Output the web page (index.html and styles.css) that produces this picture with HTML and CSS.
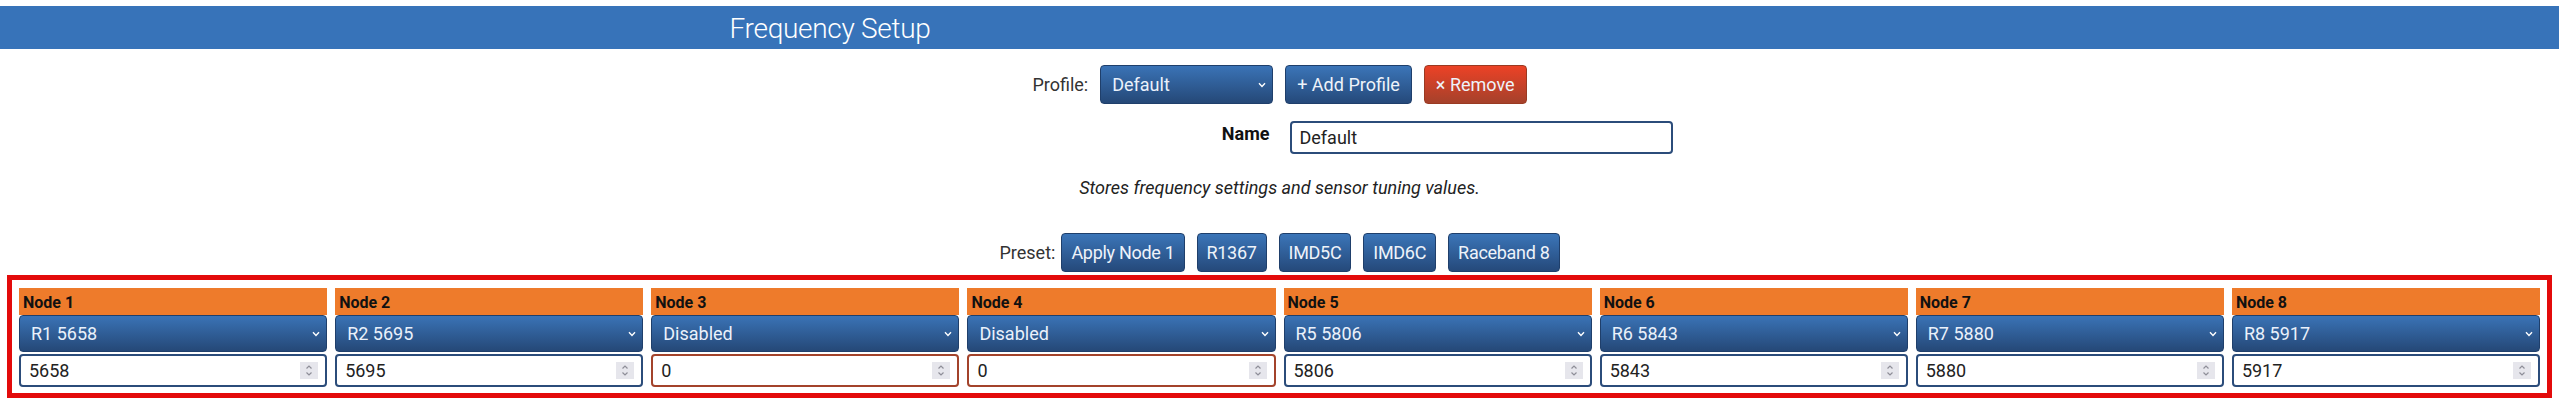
FILE: index.html
```html
<!DOCTYPE html>
<html lang="en">
<head>
<meta charset="utf-8">
<title>Frequency Setup</title>
<link rel="stylesheet" href="styles.css">
</head>
<body>
<header class="topbar">
  <div class="topbar-inner"><h1 class="title">Frequency Setup</h1></div>
</header>
<main class="page">
  <div class="profile-row">
    <label class="row-label" for="profile">Profile:</label>
    <div class="select-wrap profile-select">
      <select id="profile" class="sel"><option>Default</option></select>
      <svg class="chev" width="8" height="6" viewBox="0 0 8 6"><path d="M1 1.2 L4 4.4 L7 1.2" fill="none" stroke="#fff" stroke-width="1.4"/></svg>
    </div>
    <button class="btn btn-blue">+ Add Profile</button>
    <button class="btn btn-red">× Remove</button>
  </div>

  <div class="name-row">
    <div class="name-label">Name</div>
    <div class="name-field"><input class="text-input" type="text" value="Default"></div>
  </div>

  <p class="desc">Stores frequency settings and sensor tuning values.</p>

  <div class="preset-row">
    <span class="row-label">Preset:</span>
    <div class="preset-btns">
      <button class="btn btn-blue btn-preset">Apply Node 1</button>
      <button class="btn btn-blue btn-preset">R1367</button>
      <button class="btn btn-blue btn-preset">IMD5C</button>
      <button class="btn btn-blue btn-preset">IMD6C</button>
      <button class="btn btn-blue btn-preset">Raceband 8</button>
    </div>
  </div>

  <section class="nodes">
    <div class="node">
      <div class="node-head">Node 1</div>
      <div class="select-wrap"><select class="sel node-sel"><option>R1 5658</option></select><svg class="chev" width="8" height="6" viewBox="0 0 8 6"><path d="M1 1.2 L4 4.4 L7 1.2" fill="none" stroke="#fff" stroke-width="1.4"/></svg></div>
      <div class="num-wrap"><input class="num-input" type="text" value="5658"><span class="spin"><svg width="10" height="13" viewBox="0 0 10 13"><path d="M2.5 4.5 L5 2 L7.5 4.5 M2.5 8.5 L5 11 L7.5 8.5" fill="none" stroke="#8e8e98" stroke-width="1.2"/></svg></span></div>
    </div>
    <div class="node">
      <div class="node-head">Node 2</div>
      <div class="select-wrap"><select class="sel node-sel"><option>R2 5695</option></select><svg class="chev" width="8" height="6" viewBox="0 0 8 6"><path d="M1 1.2 L4 4.4 L7 1.2" fill="none" stroke="#fff" stroke-width="1.4"/></svg></div>
      <div class="num-wrap"><input class="num-input" type="text" value="5695"><span class="spin"><svg width="10" height="13" viewBox="0 0 10 13"><path d="M2.5 4.5 L5 2 L7.5 4.5 M2.5 8.5 L5 11 L7.5 8.5" fill="none" stroke="#8e8e98" stroke-width="1.2"/></svg></span></div>
    </div>
    <div class="node">
      <div class="node-head">Node 3</div>
      <div class="select-wrap"><select class="sel node-sel"><option>Disabled</option></select><svg class="chev" width="8" height="6" viewBox="0 0 8 6"><path d="M1 1.2 L4 4.4 L7 1.2" fill="none" stroke="#fff" stroke-width="1.4"/></svg></div>
      <div class="num-wrap num-off"><input class="num-input" type="text" value="0"><span class="spin"><svg width="10" height="13" viewBox="0 0 10 13"><path d="M2.5 4.5 L5 2 L7.5 4.5 M2.5 8.5 L5 11 L7.5 8.5" fill="none" stroke="#8e8e98" stroke-width="1.2"/></svg></span></div>
    </div>
    <div class="node">
      <div class="node-head">Node 4</div>
      <div class="select-wrap"><select class="sel node-sel"><option>Disabled</option></select><svg class="chev" width="8" height="6" viewBox="0 0 8 6"><path d="M1 1.2 L4 4.4 L7 1.2" fill="none" stroke="#fff" stroke-width="1.4"/></svg></div>
      <div class="num-wrap num-off"><input class="num-input" type="text" value="0"><span class="spin"><svg width="10" height="13" viewBox="0 0 10 13"><path d="M2.5 4.5 L5 2 L7.5 4.5 M2.5 8.5 L5 11 L7.5 8.5" fill="none" stroke="#8e8e98" stroke-width="1.2"/></svg></span></div>
    </div>
    <div class="node">
      <div class="node-head">Node 5</div>
      <div class="select-wrap"><select class="sel node-sel"><option>R5 5806</option></select><svg class="chev" width="8" height="6" viewBox="0 0 8 6"><path d="M1 1.2 L4 4.4 L7 1.2" fill="none" stroke="#fff" stroke-width="1.4"/></svg></div>
      <div class="num-wrap"><input class="num-input" type="text" value="5806"><span class="spin"><svg width="10" height="13" viewBox="0 0 10 13"><path d="M2.5 4.5 L5 2 L7.5 4.5 M2.5 8.5 L5 11 L7.5 8.5" fill="none" stroke="#8e8e98" stroke-width="1.2"/></svg></span></div>
    </div>
    <div class="node">
      <div class="node-head">Node 6</div>
      <div class="select-wrap"><select class="sel node-sel"><option>R6 5843</option></select><svg class="chev" width="8" height="6" viewBox="0 0 8 6"><path d="M1 1.2 L4 4.4 L7 1.2" fill="none" stroke="#fff" stroke-width="1.4"/></svg></div>
      <div class="num-wrap"><input class="num-input" type="text" value="5843"><span class="spin"><svg width="10" height="13" viewBox="0 0 10 13"><path d="M2.5 4.5 L5 2 L7.5 4.5 M2.5 8.5 L5 11 L7.5 8.5" fill="none" stroke="#8e8e98" stroke-width="1.2"/></svg></span></div>
    </div>
    <div class="node">
      <div class="node-head">Node 7</div>
      <div class="select-wrap"><select class="sel node-sel"><option>R7 5880</option></select><svg class="chev" width="8" height="6" viewBox="0 0 8 6"><path d="M1 1.2 L4 4.4 L7 1.2" fill="none" stroke="#fff" stroke-width="1.4"/></svg></div>
      <div class="num-wrap"><input class="num-input" type="text" value="5880"><span class="spin"><svg width="10" height="13" viewBox="0 0 10 13"><path d="M2.5 4.5 L5 2 L7.5 4.5 M2.5 8.5 L5 11 L7.5 8.5" fill="none" stroke="#8e8e98" stroke-width="1.2"/></svg></span></div>
    </div>
    <div class="node">
      <div class="node-head">Node 8</div>
      <div class="select-wrap"><select class="sel node-sel"><option>R8 5917</option></select><svg class="chev" width="8" height="6" viewBox="0 0 8 6"><path d="M1 1.2 L4 4.4 L7 1.2" fill="none" stroke="#fff" stroke-width="1.4"/></svg></div>
      <div class="num-wrap"><input class="num-input" type="text" value="5917"><span class="spin"><svg width="10" height="13" viewBox="0 0 10 13"><path d="M2.5 4.5 L5 2 L7.5 4.5 M2.5 8.5 L5 11 L7.5 8.5" fill="none" stroke="#8e8e98" stroke-width="1.2"/></svg></span></div>
    </div>
  </section>
</main>
</body>
</html>
```

FILE: styles.css
```css
* { box-sizing: border-box; }

body {
  margin: 0;
  font-family: Roboto, "Liberation Sans", sans-serif;
  color: #222;
  background: #fff;
}

/* header band */
.topbar {
  margin-top: 6px;
  height: 43px;
  background: #3773b9;
}
.topbar-inner {
  max-width: 1100px;
  margin: 0 auto;
}
.title {
  margin: 0;
  padding-top: 3px;
  font-size: 28px;
  font-weight: 300;
  line-height: 40px;
  color: #fff;
  letter-spacing: -0.3px;
}

/* generic */
.row-label {
  font-size: 18px;
  color: #333;
}

.btn {
  height: 39px;
  padding: 0 11px;
  border-radius: 4px;
  font-family: inherit;
  font-size: 18px;
  color: #eef3fa;
  cursor: pointer;
}
.btn-blue {
  border: 1px solid #1f3f6b;
  background: linear-gradient(#3b75b8, #25497a);
}
.btn-red {
  border: 1px solid #9a3a22;
  background: linear-gradient(#ec4226, #a5412b);
}
.btn-preset {
  padding: 0 9px;
  letter-spacing: -0.3px;
}

.select-wrap {
  position: relative;
}
.sel {
  display: block;
  width: 100%;
  appearance: none;
  -webkit-appearance: none;
  border: 1px solid #1f3f6b;
  border-radius: 4px;
  background: linear-gradient(#3a73b6, #254877);
  color: #eaf1fb;
  font-family: inherit;
  font-size: 18px;
  padding: 0 24px 0 11px;
}
.chev {
  position: absolute;
  right: 7px;
  top: 50%;
  margin-top: -3px;
}

/* profile row */
.profile-row {
  display: flex;
  justify-content: center;
  align-items: center;
  gap: 12px;
  margin-top: 16px;
}
.profile-select {
  width: 173px;
}
.profile-select .sel {
  height: 39px;
}

/* name row */
.name-row {
  display: flex;
  justify-content: center;
  margin-top: 17px;
}
.name-label {
  width: 393px;
  padding: 2px 10px 0 0;
  text-align: right;
  font-size: 18px;
  font-weight: 700;
  color: #111;
}
.name-field {
  width: 393px;
  padding-left: 10px;
}
.text-input {
  display: block;
  width: 383px;
  height: 33px;
  border: 2px solid #2b4c7a;
  border-radius: 4px;
  padding: 0 8px;
  font-family: inherit;
  font-size: 18px;
  color: #222;
}

/* description */
.desc {
  margin: 23px 0 0;
  text-align: center;
  font-size: 18px;
  line-height: 21px;
  font-style: italic;
  color: #222;
}

/* presets */
.preset-row {
  display: flex;
  justify-content: center;
  align-items: center;
  gap: 6px;
  margin-top: 35px;
}
.preset-btns {
  display: flex;
  gap: 12px;
}

/* nodes */
.nodes {
  margin: 3px 7px 0;
  border: 5px solid #e30b0b;
  padding: 8px 7px 6px;
  display: grid;
  grid-template-columns: repeat(8, 1fr);
  gap: 8px;
}
.node-head {
  height: 27px;
  padding: 2px 4px 0;
  line-height: 25px;
  background: #ee7b2b;
  font-size: 16px;
  font-weight: 700;
  color: #111;
}
.node-sel {
  height: 37px;
}
.num-wrap {
  margin-top: 2px;
  height: 33px;
  display: flex;
  align-items: center;
  border: 2px solid #2b4c7a;
  border-radius: 4px;
  padding: 0 7px 0 8px;
  background: #fff;
}
.num-wrap.num-off {
  border-color: #a3432b;
}
.num-input {
  flex: 1;
  min-width: 0;
  border: none;
  outline: none;
  padding: 0;
  font-family: inherit;
  font-size: 18px;
  color: #222;
  background: transparent;
}
.spin {
  width: 18px;
  height: 17px;
  display: flex;
  align-items: center;
  justify-content: center;
  background: #e6e6ec;
}
```
